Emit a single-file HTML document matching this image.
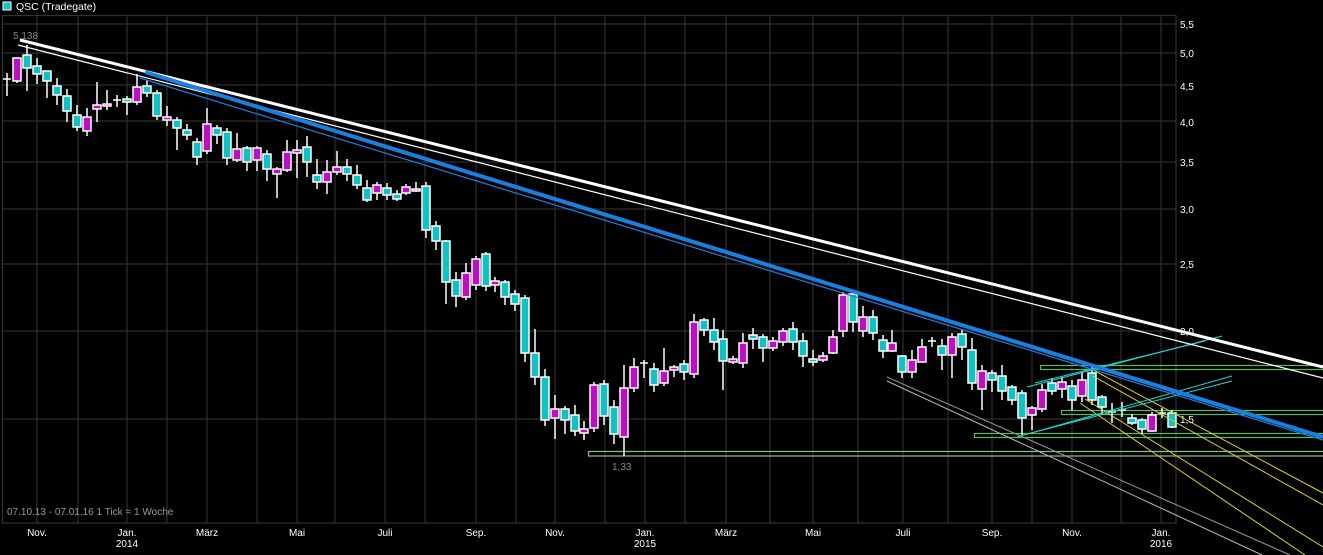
<!DOCTYPE html>
<html><head><meta charset="utf-8"><style>
html,body{margin:0;padding:0;background:#000;}
svg{display:block;}
text{font-family:"Liberation Sans",sans-serif;}
.c{fill:#12c2c2;stroke:#fff;stroke-width:1.5}
.m{fill:#bb10bf;stroke:#fff;stroke-width:1.5}
.w{stroke:#fff;stroke-width:1.5}
</style></head><body>
<svg width="1323" height="555" viewBox="0 0 1323 555" xmlns="http://www.w3.org/2000/svg">
<rect width="1323" height="555" fill="#000"/>
<!-- grid -->
<g stroke="#2e2e2e" stroke-width="1.2">
<path d="M2 24H1176M2 53H1176M2 85H1176M2 121H1176M2 162H1176M2 209H1176M2 264H1176M2 331H1176M2 419H1176"/>
<path d="M37 15V523M78 15V523M127 15V523M167 15V523M207 15V523M257 15V523M297 15V523M335 15V523M385 15V523M425 15V523M476 15V523M516 15V523M555 15V523M605 15V523M645 15V523M685 15V523M726 15V523M770 15V523M813 15V523M858 15V523M903 15V523M948 15V523M992 15V523M1032 15V523M1072 15V523M1121 15V523M1161 15V523"/>
</g>
<rect x="2.5" y="15.5" width="1173.5" height="507.5" fill="none" stroke="#333" stroke-width="1.2"/>
<!-- legend -->
<rect x="3" y="2" width="8" height="8" fill="#12c2c2" stroke="#fff" stroke-width="1"/>
<text x="16" y="10" font-size="10.5" fill="#fff">QSC (Tradegate)</text>
<!-- axis labels -->
<g font-size="10" fill="#fff">
<text x="1180" y="28">5,5</text><text x="1180" y="57">5,0</text><text x="1180" y="90">4,5</text><text x="1180" y="126">4,0</text><text x="1180" y="166">3,5</text><text x="1180" y="213">3,0</text><text x="1180" y="268">2,5</text><text x="1180" y="335">2,0</text><text x="1180" y="423">1,5</text>
</g>
<g font-size="10" fill="#fff" text-anchor="middle">
<text x="37" y="536">Nov.</text><text x="127" y="536">Jan.</text><text x="127" y="547">2014</text><text x="207" y="536">März</text><text x="297" y="536">Mai</text><text x="385" y="536">Juli</text><text x="476" y="536">Sep.</text><text x="555" y="536">Nov.</text><text x="645" y="536">Jan.</text><text x="645" y="547">2015</text><text x="726" y="536">März</text><text x="813" y="536">Mai</text><text x="903" y="536">Juli</text><text x="992" y="536">Sep.</text><text x="1072" y="536">Nov.</text><text x="1161" y="536">Jan.</text><text x="1161" y="547">2016</text>
</g>
<text x="7" y="515" font-size="10" fill="#999">07.10.13 - 07.01.16   1 Tick = 1 Woche</text>
<text x="13" y="39" font-size="10" fill="#888">5,138</text>
<text x="612" y="470" font-size="10" fill="#888">1,33</text>
<!-- rects -->
<g fill="none" stroke="#5cb85c" stroke-width="1.2">
<rect x="588.5" y="451.5" width="740" height="4.5" stroke="#8fbf8f"/>
<rect x="974.5" y="433.5" width="360" height="4"/>
<rect x="1061.5" y="410.5" width="270" height="4"/>
<rect x="1040.5" y="365.5" width="290" height="4"/>
</g>
<!-- candles -->
<g id="k">
<path class="w" d="M7 73V96M3 79H11M117 95V107M113 100H121"/>
<g class="w"><path d="M17 58V83M27 45V91M37 58V84M47 71V98M57 78V105M67 89V122M77 105V131M87 108V136M97 82V122M107 90V110M127 96V115M137 74V105M147 80V97M157 90V120M167 106V126M177 117V150M187 124V140M197 138V165M207 108V154M217 125V144M227 128V165M237 133V162M247 146V171M257 146V171M267 150V181M277 167V198M287 140V172M297 140V178M307 136V177M317 159V189M327 160V194M337 151V175M347 159V181M357 165V189M367 180V202M377 182V200M387 183V200M397 190V201M406 184V195M416 182V192M426 182V238M436 221V250M446 240V304M456 272V307M466 263V300M476 256V290M486 252V291M495 277V292M505 280V305M515 290V311M525 295V362M535 329V385M545 369V426M555 395V439M565 406V434M575 405V436M584 421V440M594 382V432M604 380V425M614 400V444M624 365V456M634 358V392M654 363V392M664 348V386M674 365V377M684 360V380M694 314V378M704 318V336M714 318V350M723 330V390M733 356V364M743 333V368M753 328V349M763 334V362M773 337V351M783 328V346M793 322V350M803 333V367M813 350V366M823 352V362M833 330V354M843 292V337M853 290V332M863 306V337M873 310V340M883 335V358M892 330V352M902 355V378M912 350V378M922 339V362M942 339V370M952 333V378M962 330V360M972 338V390M982 365V410M992 370V392M1002 365V400M1012 385V405M1022 390V435M1032 406V430M1042 384V412M1052 378V395M1062 377V398M1072 380V410M1082 372V402M1092 365V405M1102 395V415M1132 414V425M1142 418V434M1152 412V432M1172 410V428"/>
<path d="M640 363H648M644 360V378M928 341H936M932 337V347M1108 412H1116M1112 403V423M1118 410H1126M1122 402V417M1158 413H1166M1162 408V418"/></g>
<rect class="m" x="13" y="58" width="8" height="23"/>
<rect class="c" x="23" y="55" width="8" height="13"/>
<rect class="c" x="33" y="66" width="8" height="8"/>
<rect class="c" x="43" y="71" width="8" height="10"/>
<rect class="c" x="53" y="86" width="8" height="9"/>
<rect class="c" x="63" y="96" width="8" height="15"/>
<rect class="c" x="73" y="115" width="8" height="12"/>
<rect class="m" x="83" y="117" width="8" height="14"/>
<rect class="m" x="93" y="105" width="8" height="4"/>
<rect class="m" x="103" y="104" width="8" height="2"/>
<rect class="c" x="123" y="99" width="8" height="3"/>
<rect class="m" x="133" y="87" width="8" height="15"/>
<rect class="c" x="143" y="86" width="8" height="7"/>
<rect class="c" x="153" y="93" width="8" height="23"/>
<rect class="m" x="163" y="117" width="8" height="3"/>
<rect class="c" x="173" y="120" width="8" height="8"/>
<rect class="c" x="183" y="130" width="8" height="5"/>
<rect class="c" x="193" y="142" width="8" height="15"/>
<rect class="m" x="203" y="124" width="8" height="27"/>
<rect class="c" x="213" y="128" width="8" height="7"/>
<rect class="c" x="223" y="132" width="8" height="26"/>
<rect class="m" x="233" y="149" width="8" height="11"/>
<rect class="c" x="243" y="148" width="8" height="14"/>
<rect class="m" x="253" y="148" width="8" height="12"/>
<rect class="c" x="263" y="154" width="8" height="15"/>
<rect class="m" x="273" y="169" width="8" height="5"/>
<rect class="m" x="283" y="152" width="8" height="18"/>
<rect class="m" x="293" y="150" width="8" height="3"/>
<rect class="c" x="303" y="147" width="8" height="15"/>
<rect class="c" x="313" y="175" width="8" height="7"/>
<rect class="m" x="323" y="172" width="8" height="10"/>
<rect class="m" x="333" y="167" width="8" height="5"/>
<rect class="c" x="343" y="167" width="8" height="7"/>
<rect class="c" x="353" y="175" width="8" height="10"/>
<rect class="c" x="363" y="188" width="8" height="12"/>
<rect class="m" x="373" y="185" width="8" height="8"/>
<rect class="c" x="383" y="188" width="8" height="7"/>
<rect class="c" x="393" y="194" width="8" height="5"/>
<rect class="m" x="402" y="187" width="8" height="6"/>
<rect class="m" x="412" y="189" width="8" height="2"/>
<rect class="c" x="422" y="186" width="8" height="44"/>
<rect class="c" x="432" y="226" width="8" height="15"/>
<rect class="c" x="442" y="241" width="8" height="41"/>
<rect class="c" x="452" y="280" width="8" height="16"/>
<rect class="m" x="462" y="273" width="8" height="24"/>
<rect class="m" x="472" y="259" width="8" height="26"/>
<rect class="c" x="482" y="254" width="8" height="32"/>
<rect class="m" x="491" y="281" width="8" height="4"/>
<rect class="c" x="501" y="282" width="8" height="15"/>
<rect class="c" x="511" y="294" width="8" height="10"/>
<rect class="c" x="521" y="298" width="8" height="55"/>
<rect class="c" x="531" y="353" width="8" height="24"/>
<rect class="c" x="541" y="377" width="8" height="43"/>
<rect class="m" x="551" y="409" width="8" height="9"/>
<rect class="c" x="561" y="409" width="8" height="11"/>
<rect class="c" x="571" y="415" width="8" height="16"/>
<rect class="m" x="580" y="429" width="8" height="4"/>
<rect class="m" x="590" y="385" width="8" height="43"/>
<rect class="c" x="600" y="384" width="8" height="32"/>
<rect class="c" x="610" y="407" width="8" height="27"/>
<rect class="m" x="620" y="388" width="8" height="49"/>
<rect class="m" x="630" y="367" width="8" height="21"/>
<rect class="c" x="650" y="369" width="8" height="16"/>
<rect class="m" x="660" y="371" width="8" height="12"/>
<rect class="m" x="670" y="367" width="8" height="3"/>
<rect class="c" x="680" y="364" width="8" height="8"/>
<rect class="m" x="690" y="322" width="8" height="52"/>
<rect class="c" x="700" y="320" width="8" height="10"/>
<rect class="c" x="710" y="330" width="8" height="12"/>
<rect class="c" x="719" y="339" width="8" height="22"/>
<rect class="m" x="729" y="359" width="8" height="3"/>
<rect class="m" x="739" y="343" width="8" height="20"/>
<rect class="c" x="749" y="335" width="8" height="4"/>
<rect class="c" x="759" y="337" width="8" height="11"/>
<rect class="m" x="769" y="341" width="8" height="7"/>
<rect class="m" x="779" y="331" width="8" height="11"/>
<rect class="c" x="789" y="329" width="8" height="13"/>
<rect class="c" x="799" y="341" width="8" height="15"/>
<rect class="c" x="809" y="359" width="8" height="3"/>
<rect class="m" x="819" y="356" width="8" height="4"/>
<rect class="m" x="829" y="337" width="8" height="16"/>
<rect class="m" x="839" y="295" width="8" height="36"/>
<rect class="c" x="849" y="294" width="8" height="28"/>
<rect class="m" x="859" y="317" width="8" height="14"/>
<rect class="c" x="869" y="317" width="8" height="16"/>
<rect class="c" x="879" y="340" width="8" height="11"/>
<rect class="m" x="888" y="343" width="8" height="8"/>
<rect class="c" x="898" y="356" width="8" height="16"/>
<rect class="m" x="908" y="360" width="8" height="12"/>
<rect class="m" x="918" y="347" width="8" height="15"/>
<rect class="c" x="938" y="346" width="8" height="9"/>
<rect class="m" x="948" y="337" width="8" height="18"/>
<rect class="c" x="958" y="334" width="8" height="13"/>
<rect class="c" x="968" y="350" width="8" height="33"/>
<rect class="m" x="978" y="371" width="8" height="18"/>
<rect class="c" x="988" y="373" width="8" height="7"/>
<rect class="c" x="998" y="376" width="8" height="15"/>
<rect class="c" x="1008" y="387" width="8" height="13"/>
<rect class="c" x="1018" y="393" width="8" height="25"/>
<rect class="m" x="1028" y="408" width="8" height="7"/>
<rect class="m" x="1038" y="390" width="8" height="19"/>
<rect class="c" x="1048" y="383" width="8" height="8"/>
<rect class="m" x="1058" y="382" width="8" height="7"/>
<rect class="c" x="1068" y="386" width="8" height="14"/>
<rect class="m" x="1078" y="380" width="8" height="16"/>
<rect class="c" x="1088" y="373" width="8" height="27"/>
<rect class="c" x="1098" y="397" width="8" height="10"/>
<rect class="c" x="1128" y="418" width="8" height="5"/>
<rect class="c" x="1138" y="420" width="8" height="9"/>
<rect class="m" x="1148" y="415" width="8" height="16"/>
<rect class="c" x="1168" y="413" width="8" height="14"/>
</g>
<!-- trend lines -->
<g fill="none">
<line x1="887" y1="377" x2="1290" y2="555" stroke="#999" stroke-width="1"/>
<line x1="887" y1="381" x2="1262" y2="555" stroke="#bbb" stroke-width="1"/>
<line x1="1093" y1="370" x2="1323" y2="493" stroke="#e0d020" stroke-width="1"/>
<line x1="1093" y1="376" x2="1323" y2="505" stroke="#e0d020" stroke-width="1"/>
<line x1="1080" y1="403" x2="1305" y2="555" stroke="#e0d020" stroke-width="1"/>
<line x1="1085" y1="399" x2="1323" y2="547" stroke="#e0d020" stroke-width="1"/>
<line x1="1027" y1="387" x2="1222" y2="336" stroke="#20d8d8" stroke-width="1"/>
<line x1="1035" y1="383" x2="1205" y2="341" stroke="#20d8d8" stroke-width="1"/>
<line x1="1017" y1="437" x2="1232" y2="376" stroke="#20d8d8" stroke-width="1"/>
<line x1="1027" y1="434" x2="1232" y2="381" stroke="#20d8d8" stroke-width="1"/>
<line x1="18" y1="45" x2="1323" y2="378" stroke="#fff" stroke-width="1.2"/>
<line x1="20" y1="40" x2="1323" y2="367" stroke="#fff" stroke-width="3"/>
<line x1="140" y1="78" x2="1323" y2="440" stroke="#1a80e0" stroke-width="1.2"/>
<line x1="145" y1="72" x2="1323" y2="437" stroke="#1a80e0" stroke-width="4"/>
</g>
</svg>
</body></html>
